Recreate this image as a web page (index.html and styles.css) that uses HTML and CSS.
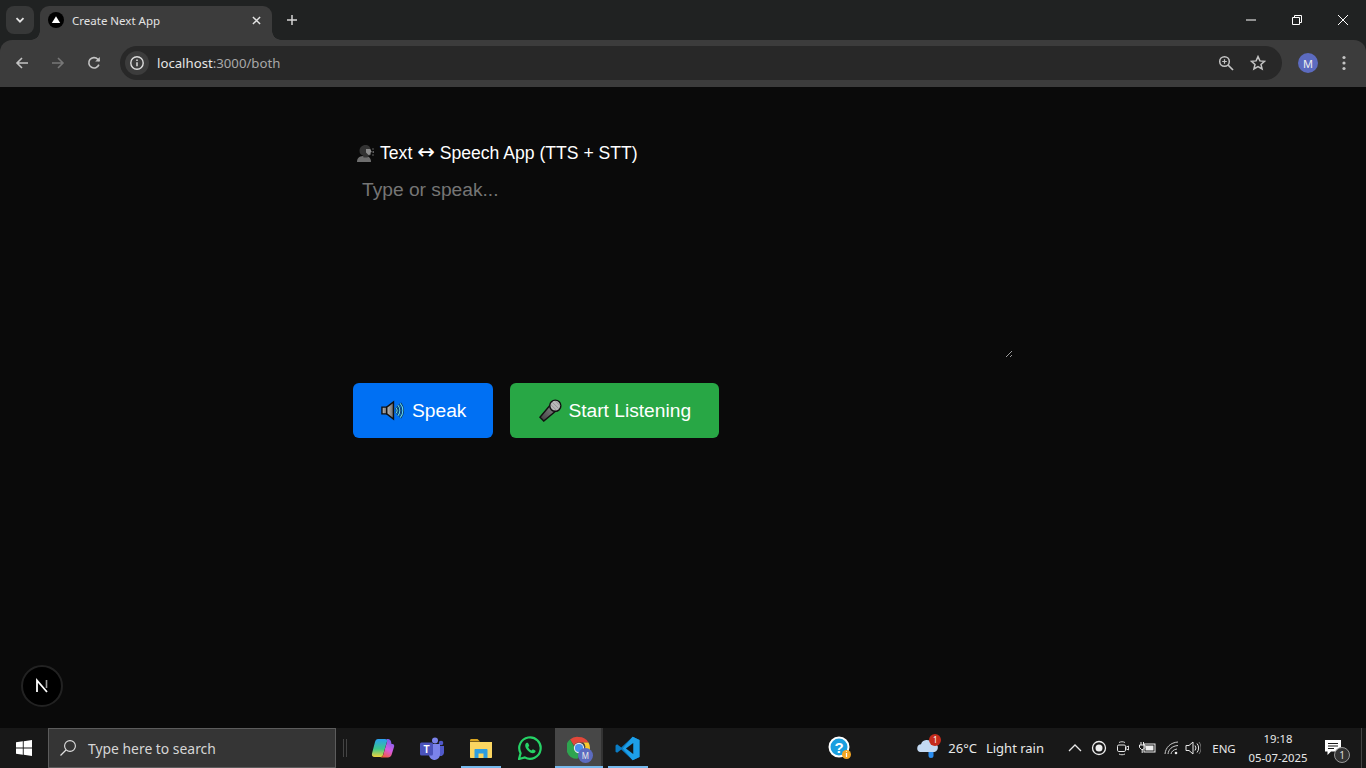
FILE: index.html
```html
<!DOCTYPE html>
<html lang="en">
<head>
<meta charset="utf-8">
<title>Create Next App</title>
<link rel="stylesheet" href="styles.css">
</head>
<body>
<header class="browser">
  <div class="tabstrip">
    <button class="tab-search" aria-label="Search tabs"><svg class="ic12" viewBox="0 0 12 12"><path d="M2.5 4.2 6 7.7l3.5-3.5" fill="none" stroke="#e3e3e3" stroke-width="1.8"/></svg></button>
    <div class="tab">
      <svg class="favicon" viewBox="0 0 16 16"><circle cx="8" cy="8" r="8" fill="#000"/><path d="M8 4.2 12.2 11H3.8z" fill="#fff"/></svg>
      <span class="tab-title">Create Next App</span>
      <svg class="tab-close" viewBox="0 0 10 10"><path d="M1 1l8 8M9 1l-8 8" stroke="#e3e3e3" stroke-width="1.6"/></svg>
    </div>
    <svg class="new-tab" viewBox="0 0 10 10"><path d="M5 0v10M0 5h10" stroke="#d5d5d5" stroke-width="1.5"/></svg>
    <div class="win-controls">
      <span class="win-btn"><svg viewBox="0 0 12 12" class="ic12"><path d="M1 6h10" stroke="#fff" stroke-width="1"/></svg></span>
      <span class="win-btn"><svg viewBox="0 0 12 12" class="ic12"><path d="M1.5 3.5h7v7h-7zM3.5 3.5v-2h7v7h-2" fill="none" stroke="#fff" stroke-width="1"/></svg></span>
      <span class="win-btn"><svg viewBox="0 0 12 12" class="ic12"><path d="M1 1l10 10M11 1 1 11" stroke="#fff" stroke-width="1"/></svg></span>
    </div>
  </div>
  <div class="toolbar">
    <svg class="nav" viewBox="0 0 14 14"><path d="M13 7H2M7 2 2 7l5 5" fill="none" stroke="#c4c4c4" stroke-width="1.6"/></svg>
    <svg class="nav" viewBox="0 0 14 14"><path d="M1 7h11M7 2l5 5-5 5" fill="none" stroke="#777" stroke-width="1.6"/></svg>
    <svg class="nav" viewBox="0 0 14 14"><path d="M11.9 8.6A5.2 5.2 0 1 1 10.8 3.2L12.4 5" fill="none" stroke="#c4c4c4" stroke-width="1.6"/><path d="M12.8 1v4.6H8.2z" fill="#c4c4c4"/></svg>
    <div class="omnibox">
      <span class="site-chip"><svg class="ic16" viewBox="0 0 16 16"><circle cx="8" cy="8" r="6.2" fill="none" stroke="#dcdcdc" stroke-width="1.4"/><path d="M8 7.2v4M8 4.6v1.4" stroke="#dcdcdc" stroke-width="1.5"/></svg></span>
      <span class="url">localhost<span class="url-rest">:3000/both</span></span>
      <svg class="omni-zoom" viewBox="0 0 16 16"><circle cx="6.5" cy="6.5" r="4.8" fill="none" stroke="#c4c4c4" stroke-width="1.5"/><path d="M10 10l5 5" stroke="#c4c4c4" stroke-width="1.7"/><path d="M4.2 6.5h4.6M6.5 4.2v4.6" stroke="#c4c4c4" stroke-width="1.2"/></svg>
      <svg class="omni-star" viewBox="0 0 16 16"><path d="M8 1.6l1.9 4.3 4.6.4-3.5 3.1 1.1 4.6L8 11.6 3.9 14l1.1-4.6-3.5-3.1 4.6-.4z" fill="none" stroke="#c4c4c4" stroke-width="1.5"/></svg>
    </div>
    <span class="avatar">M</span>
    <svg class="kebab" viewBox="0 0 4 16"><circle cx="2" cy="2.5" r="1.6" fill="#c4c4c4"/><circle cx="2" cy="8" r="1.6" fill="#c4c4c4"/><circle cx="2" cy="13.5" r="1.6" fill="#c4c4c4"/></svg>
  </div>
</header>

<main class="page">
  <div class="app">
    <h2 class="title">
      <svg class="title-emoji" viewBox="0 0 18 18"><path d="M1 18c0-4 2-5.500 6-6h3c3 .5 5 2 5 6z" fill="#6e6e6e"/><path d="M3.500 7c0-3.500 2.500-6 6-6 3 0 5 2 5 4.500l1.200 2.500-1.200.5v2c0 1-1 1.500-2 1.300l-1 1.700h-4l-.5-2C5 11 3.500 9.500 3.500 7z" fill="#333"/><path d="M10 5h4.300l1.400 3-1.200.5v2l-2 .5-2.500-2.500z" fill="#8c8c8c"/><path d="M16.500 5h1M16.500 8h1.500M16.500 11h1" stroke="#b0b0b0" stroke-width="1"/></svg>
      <span>Text <span class="title-arrow">↔</span> Speech App (TTS + STT)</span>
    </h2>
    <textarea class="input" placeholder="Type or speak..."></textarea>
    <div class="actions">
      <button class="btn btn-blue">
        <svg class="btn-emoji" viewBox="0 0 24 24"><defs><linearGradient id="spk" x1="0" y1="0" x2="1" y2="0"><stop offset="0" stop-color="#bdbdbd"/><stop offset="1" stop-color="#6a6a6a"/></linearGradient></defs><path d="M1 8.500h5v7H1z" fill="url(#spk)" stroke="#111" stroke-width="1.500"/><path d="M6 8.500 13 3v18l-7-5.500z" fill="url(#spk)" stroke="#111" stroke-width="1.500"/><path d="M15.500 9a4.500 4.500 0 0 1 0 6M17.500 6.500a8 8 0 0 1 0 11M20 4.500a11.500 11.500 0 0 1 0 15" fill="none" stroke="#0b2233" stroke-width="2.400"/><path d="M15.500 9a4.500 4.500 0 0 1 0 6M17.500 6.500a8 8 0 0 1 0 11M20 4.500a11.500 11.500 0 0 1 0 15" fill="none" stroke="#5fd4f0" stroke-width="1.200"/></svg>
        <span>Speak</span>
      </button>
      <button class="btn btn-green">
        <svg class="btn-emoji" viewBox="0 0 24 24"><defs><linearGradient id="mic" x1="0" y1="1" x2="1" y2="0"><stop offset="0" stop-color="#3a3a3a"/><stop offset="1" stop-color="#8a8a8a"/></linearGradient></defs><path d="M11.500 6.500 17.500 12.500 5 23 1 19z" fill="url(#mic)" stroke="#111" stroke-width="1.500"/><circle cx="17" cy="7" r="5.800" fill="#b8b8b8" stroke="#111" stroke-width="1.500"/><path d="M14 3.500l6.500 6.500M17 2l5 5M12.500 6l5.500 5.500" stroke="#8a8a8a" stroke-width=".8"/></svg>
        <span>Start Listening</span>
      </button>
    </div>
  </div>
  <button class="next-badge" aria-label="Next.js dev tools"><svg class="next-n" viewBox="0 0 16 16"><path d="M3 14V2.500L13 14" fill="none" stroke="#fff" stroke-width="1.800"/><path d="M12.500 2v8" stroke="#9a9a9a" stroke-width="1.600"/></svg></button>
</main>

<footer class="taskbar">
  <span class="start"><svg class="ic16b" viewBox="0 0 16 16"><path d="M0 2.300 6.800 1.300v6.300H0zM7.700 1.200 16 0v7.600H7.700zM0 8.400h6.800v6.300L0 13.700zM7.700 8.400H16V16l-8.300-1.200z" fill="#fff"/></svg></span>
  <div class="search">
    <svg class="search-ic" viewBox="0 0 18 18"><circle cx="11" cy="7" r="5.400" fill="none" stroke="#e0e0e0" stroke-width="1.100"/><path d="M7 11l-5.500 5.500" stroke="#e0e0e0" stroke-width="1.200"/></svg>
    <span class="search-text">Type here to search</span>
  </div>
  <span class="grip"></span>
  <div class="apps">
    <span class="app-ic"><svg class="ic24" viewBox="0 0 24 24"><defs><linearGradient id="cpa" x1="0.300" y1="0" x2="0.300" y2="1"><stop offset="0" stop-color="#2a9ff0"/><stop offset=".55" stop-color="#3cc88a"/><stop offset="1" stop-color="#f2d23c"/></linearGradient><linearGradient id="cpb" x1="0.700" y1="0" x2="0.300" y2="1"><stop offset="0" stop-color="#6f63f0"/><stop offset=".55" stop-color="#d65ce0"/><stop offset="1" stop-color="#f5583c"/></linearGradient></defs><path d="M7 3h7c1.500 0 2.500 1 2 2.500L12 19c-.5 1.500-1.500 2-2.500 2H3.500C1.500 21 .5 19.500 1 17.500L4 6c.5-1.800 1.500-3 3-3z" fill="url(#cpa)"/><path d="M15 3h2c1.500 0 2.500 1 3 2.500l.5 2.500h1c1.500 0 2 1.500 1.500 3l-2.500 8c-.5 1.500-2 2.500-3.500 2.500H9c1.500 0 2.700-1 3.200-2.500L16 6c.4-1.300 0-2.300-1-3z" fill="url(#cpb)"/></svg></span>
    <span class="app-ic"><svg class="ic24" viewBox="0 0 24 24"><circle cx="15" cy="4.500" r="3" fill="#7b83eb"/><circle cx="21" cy="7" r="2.300" fill="#5059c9"/><path d="M18 10h6v7a3.500 3.500 0 0 1-6 2z" fill="#5059c9"/><path d="M8 8h12v10a5.500 5.500 0 0 1-11 1z" fill="#7b83eb"/><rect x="0" y="6.500" width="13" height="13" rx="1.500" fill="#4b53bc"/><text class="teams-t" x="6.500" y="16.500">T</text></svg></span>
    <span class="app-ic app-open"><svg class="ic24" viewBox="0 0 24 24"><path d="M1 4.500C1 3.500 1.500 3 2.500 3h6L11 5.500h-10z" fill="#d9a520"/><path d="M1 6h22v15c0 .6-.4 1-1 1H2c-.6 0-1-.4-1-1z" fill="#fbd661"/><path d="M5.500 22v-8c0-.6.400-1 1-1h11c.6 0 1 .4 1 1v8h-4v-4.500h-5V22z" fill="#2f9ee0"/></svg></span>
    <span class="app-ic app-whatsapp"><svg class="ic24" viewBox="0 0 24 24"><path d="M1 23l1.600-5.800A10.700 10.700 0 1 1 6.800 21.400z" fill="none" stroke="#25d366" stroke-width="2.200"/><path d="M8.800 6.800c-.5 0-1.600.9-1.600 2.800 0 3.300 4.200 7.600 7.600 7.600 1.900 0 2.800-1.200 2.800-2.200 0-.4-2.400-1.700-2.800-1.700l-1.200 1.300c-1.500-.5-3-2-3.500-3.500l1.200-1.200c0-.5-1.200-3.100-1.600-3.100z" fill="#25d366"/></svg></span>
    <span class="app-ic app-active"><svg class="ic24" viewBox="0 0 24 24"><path d="M12 1a11 11 0 0 1 9.500 5.500H12a5.500 5.500 0 0 0-5 3L3 3.500A11 11 0 0 1 12 1z" fill="#e2483a"/><path d="M21.500 6.500A11 11 0 0 1 12 23l4.800-8.300a5.500 5.500 0 0 0-.5-8.200z" fill="#f8c92e"/><path d="M3 3.500l4.800 8.300a5.500 5.500 0 0 0 5.800 5.500L10.500 22.800A11 11 0 0 1 3 3.500z" fill="#2ea44f"/><circle cx="12" cy="12" r="4.600" fill="#4a90f0" stroke="#e8e8e8" stroke-width="1.100"/></svg><span class="profile-badge">M</span></span>
    <span class="app-ic app-open"><svg class="ic24b" viewBox="0 0 24 24"><path d="M17 .8 23.500 3.800v16.400L17 23.200 6 13 2 16 .5 15V9l1.500-1 4 3z" fill="#0a7cc4"/><path d="M17 .8 23.500 3.800v16.400L17 23.200 7.500 12z" fill="#1d9fe8"/><path d="M17.500 6.700v10.600L10.500 12z" fill="#161616"/></svg></span>
  </div>
  <div class="tray">
    <span class="help"><svg class="ic24" viewBox="0 0 24 24"><circle cx="11" cy="11" r="9.500" fill="#1a9fe0" stroke="#fff" stroke-width="2"/><text class="help-q" x="11" y="16.500">?</text><circle cx="18.500" cy="18.500" r="4.500" fill="#f5a623"/><path d="M18.500 17v4M18.500 15.300v.8" stroke="#fff" stroke-width="1.200"/></svg></span>
    <span class="weather">
      <span class="weather-ic"><svg class="ic24" viewBox="0 0 24 24"><path d="M4 16a4 4 0 0 1 1-7.800A6 6 0 0 1 16 7a4.500 4.500 0 0 1 2.500 9z" fill="#c3d9f2"/><path d="M12.500 16h5v3.500a2.500 2.500 0 0 1-5 0z" fill="#2a8df0"/></svg><span class="weather-badge">1</span></span>
      <span class="weather-text">26°C</span>
      <span class="weather-text weather-desc">Light rain</span>
    </span>
    <span class="tray-ic"><svg class="ic12b" viewBox="0 0 14 8"><path d="M1 7l6-6 6 6" fill="none" stroke="#e8e8e8" stroke-width="1.300"/></svg></span>
    <span class="tray-ic"><svg class="ic16" viewBox="0 0 16 16"><circle cx="8" cy="8" r="6.500" fill="none" stroke="#eee" stroke-width="1.300"/><circle cx="8" cy="8" r="3.500" fill="#eee"/></svg></span>
    <span class="tray-ic"><svg class="ic16" viewBox="0 0 16 16"><rect x="2.500" y="5" width="8" height="6.500" rx="1.300" fill="none" stroke="#e8e8e8"/><path d="M10.500 7.500l3-1.500v4l-3-1.500zM4 2.500c2-1 4-1 6 0M4 14c2 1 4 1 6 0" fill="none" stroke="#e8e8e8" stroke-width=".9"/></svg></span>
    <span class="tray-ic tray-battery"><svg class="ic16w" viewBox="0 0 18 14"><rect x="6" y="3" width="11" height="8" fill="none" stroke="#eee"/><rect x="7.500" y="4.500" width="8" height="5" fill="#eee"/><path d="M3 1v3M5.500 1v3M1.500 4h5.500v2.500L5 8.500H3.500L1.500 6.500zM4.200 8.500V12" fill="none" stroke="#eee"/></svg></span>
    <span class="tray-ic tray-wifi"><svg class="ic16" viewBox="0 0 16 16"><path d="M1 14C1.500 7.500 6.500 2.500 14 2M4 14c.4-4.500 4-8 10-8.500M7 14c.3-2.300 2.500-4.500 6-5" fill="none" stroke="#ccc"/><circle cx="12" cy="13" r="1.300" fill="#eee"/></svg></span>
    <span class="tray-ic tray-vol"><svg class="ic16" viewBox="0 0 16 16"><path d="M1 5.500h3L8 2v12l-4-3.500H1z" fill="none" stroke="#e8e8e8"/><path d="M10 5.500a4 4 0 0 1 0 5M12 3.500a7 7 0 0 1 0 9" fill="none" stroke="#e8e8e8"/><path d="M14 2a9.500 9.500 0 0 1 0 12" fill="none" stroke="#777"/></svg></span>
    <span class="lang">ENG</span>
    <span class="clock"><span>19:18</span><span>05-07-2025</span></span>
    <span class="notify"><svg class="ic18" viewBox="0 0 18 18"><path d="M1 1h16v11.500H7L3.500 16v-3.500H1z" fill="#fff"/><path d="M4 4.500h10M4 7h10M4 9.500h6" stroke="#1a1a1a"/></svg><span class="notify-count">1</span></span>
    <span class="show-desktop"></span>
  </div>
</footer>
</body>
</html>
```

FILE: styles.css
```css
* { box-sizing: border-box; }
html, body { margin: 0; height: 100%; }
body {
  width: 1366px;
  height: 768px;
  overflow: hidden;
  display: flex;
  flex-direction: column;
  background: #0a0a0a;
  font-family: "Liberation Sans", Arial, sans-serif;
}
svg { display: block; flex: none; }
button { font-family: inherit; }

.ic12 { width: 12px; height: 12px; }
.ic12b { width: 14px; height: 8px; }
.ic16 { width: 16px; height: 16px; }
.ic16b { width: 16px; height: 16px; }
.ic16w { width: 18px; height: 14px; }
.ic18 { width: 18px; height: 18px; }
.ic24 { width: 24px; height: 24px; }
.ic24b { width: 25px; height: 25px; }

/* browser chrome */
.browser { flex: none; height: 87px; background: #202222; }
.tabstrip {
  height: 40px;
  display: flex;
  align-items: flex-end;
  padding-left: 6px;
  font-family: "Noto Sans", "Open Sans", sans-serif;
}
.tab-search {
  width: 28px;
  height: 28px;
  margin-bottom: 6px;
  padding: 0;
  border: 0;
  border-radius: 8px;
  background: #373838;
  display: flex;
  align-items: center;
  justify-content: center;
}
.tab {
  position: relative;
  width: 232px;
  height: 34px;
  margin-left: 6px;
  padding: 0 10px 6px 8px;
  display: flex;
  align-items: center;
  background: #3c3c3c;
  border-radius: 9px 9px 0 0;
}
.tab::before, .tab::after {
  content: "";
  position: absolute;
  bottom: 0;
  width: 9px;
  height: 9px;
}
.tab::before { left: -9px; background: radial-gradient(circle at 0 0, transparent 8.5px, #3c3c3c 9px); }
.tab::after { right: -9px; background: radial-gradient(circle at 100% 0, transparent 8.5px, #3c3c3c 9px); }
.favicon { width: 16px; height: 16px; }
.tab-title {
  flex: 1;
  margin-left: 8px;
  color: #e3e3e3;
  font-size: 11.5px;
  white-space: nowrap;
}
.tab-close { width: 9px; height: 9px; margin-right: 1px; }
.new-tab { width: 10px; height: 10px; margin: 0 0 15px 15px; }
.win-controls { margin-left: auto; display: flex; align-self: flex-start; }
.win-btn {
  width: 46px;
  height: 40px;
  display: flex;
  align-items: center;
  justify-content: center;
}
.toolbar {
  position: relative;
  height: 47px;
  display: flex;
  align-items: center;
  padding: 0 20px 1px 15px;
  background: #3c3c3c;
  border-radius: 12px 12px 0 0;
}
.nav { width: 14px; height: 14px; margin-right: 22px; }
.nav:nth-child(3) { margin-right: 19px; }
.omnibox {
  flex: 1;
  height: 34px;
  margin-right: 16px;
  padding: 0 16px 0 5px;
  display: flex;
  align-items: center;
  background: #282828;
  border-radius: 17px;
  font-family: "Noto Sans", "Open Sans", sans-serif;
}
.site-chip {
  width: 24px;
  height: 24px;
  border-radius: 50%;
  background: #3c3c3c;
  display: flex;
  align-items: center;
  justify-content: center;
}
.url { margin-left: 8px; flex: 1; color: #e6e6e6; font-size: 13.2px; }
.url-rest { color: #a8a8a8; }
.omni-zoom { width: 16px; height: 16px; margin-right: 16px; }
.omni-star { width: 16px; height: 16px; }
.avatar {
  width: 20px;
  height: 20px;
  border-radius: 50%;
  background: #5c6bc0;
  color: #f0f0f0;
  font-family: "Noto Sans", sans-serif;
  font-size: 11px;
  display: flex;
  align-items: center;
  justify-content: center;
}
.kebab { width: 4px; height: 16px; margin-left: 24px; }

/* page */
.page {
  position: relative;
  flex: 1;
  min-height: 0;
  display: flex;
  justify-content: center;
  background: #0a0a0a;
}
.app { width: 660px; padding-top: 56px; }
.title {
  margin: 0;
  height: 20px;
  display: flex;
  align-items: center;
  gap: 6px;
  padding-left: 3px;
  color: #fff;
  font-size: 17.6px;
  font-weight: 400;
  white-space: nowrap;
}
.title-arrow {
  font-family: "DejaVu Sans", sans-serif;
  font-size: 21px;
  line-height: 0;
}
.title-emoji { width: 18px; height: 18px; }
.input {
  display: block;
  width: 660px;
  height: 185px;
  margin-top: 10px;
  padding: 6px 9px;
  border: 0;
  outline: 0;
  background: transparent;
  color: #ededed;
  color-scheme: dark;
  font-family: inherit;
  font-size: 19.2px;
}
.input::placeholder { color: #757575; }
.actions { display: flex; gap: 17px; margin-top: 25px; }
.btn {
  height: 55px;
  padding: 0 27px 0 28px;
  display: flex;
  align-items: center;
  gap: 8px;
  border: 0;
  border-radius: 6px;
  color: #fff;
  font-size: 19.2px;
}
.btn-blue { background: #0070f3; }
.btn-green { background: #28a745; padding: 0 28px 0 29px; gap: 6px; }
.btn-emoji { width: 23px; height: 23px; }
.next-badge {
  position: absolute;
  left: 21px;
  bottom: 21px;
  width: 42px;
  height: 42px;
  padding: 0;
  border: 2px solid #222;
  border-radius: 50%;
  background: #000;
  display: flex;
  align-items: center;
  justify-content: center;
}
.next-n { width: 16px; height: 16px; }

/* taskbar */
.taskbar {
  flex: none;
  height: 40px;
  display: flex;
  align-items: center;
  background: #181818;
  font-family: "Noto Sans", "Open Sans", sans-serif;
  color: #e8e8e8;
}
.start {
  width: 48px;
  height: 40px;
  display: flex;
  align-items: center;
  justify-content: center;
}
.search {
  width: 288px;
  height: 40px;
  padding-left: 10px;
  display: flex;
  align-items: center;
  background: #353535;
  border: 1px solid #5c5c5c;
}
.search-ic { width: 18px; height: 18px; }
.search-text { margin-left: 11px; font-size: 13.9px; color: #d6d6d6; white-space: nowrap; }
.grip {
  width: 4px;
  height: 18px;
  margin-left: 7px;
  border-left: 1px solid #444;
  border-right: 1px solid #444;
}
.apps { display: flex; margin-left: 11px; height: 40px; }
.app-ic {
  position: relative;
  width: 49px;
  height: 40px;
  display: flex;
  align-items: center;
  justify-content: center;
}
.app-whatsapp { width: 50px; }
.app-open::after, .app-active::after {
  content: "";
  position: absolute;
  bottom: 0;
  left: 5px;
  right: 4px;
  height: 2px;
  background: #76b9ed;
}
.app-active { width: 48px; background: #474747; box-shadow: inset -2px 0 0 #333; }
.app-active::after { left: 0; right: 0; }
.profile-badge {
  position: absolute;
  left: 23px;
  top: 20px;
  width: 15px;
  height: 15px;
  border-radius: 50%;
  background: #5c6bc0;
  color: #e8e8e8;
  font-size: 8px;
  line-height: 15px;
  text-align: center;
}
.teams-t { fill: #fff; font: 700 10px "Liberation Sans", sans-serif; text-anchor: middle; }
.help-q { fill: #fff; font: 700 15px "Liberation Sans", sans-serif; text-anchor: middle; }
.tray { margin-left: auto; display: flex; align-items: center; height: 40px; }
.help { margin-right: 64px; }
.weather { display: flex; align-items: center; font-size: 13px; white-space: nowrap; }
.weather-ic { position: relative; margin-right: 8px; }
.weather-badge {
  position: absolute;
  right: -1px;
  top: -2px;
  width: 12px;
  height: 12px;
  border-radius: 50%;
  background: #c42b1c;
  color: #fff;
  font-size: 8px;
  line-height: 12px;
  text-align: center;
}
.weather-desc { margin-left: 9px; margin-right: 19px; }
.tray-ic {
  width: 24px;
  height: 40px;
  display: flex;
  align-items: center;
  justify-content: center;
}
.tray-battery { margin-right: 2px; }
.tray-wifi { width: 22px; }
.tray-vol { width: 20px; }
.lang { width: 36px; margin-left: 3px; text-align: center; font-size: 11.5px; }
.clock {
  width: 72px;
  display: flex;
  flex-direction: column;
  align-items: center;
  font-size: 11.3px;
  line-height: 19px;
}
.notify {
  position: relative;
  width: 38px;
  margin-right: 9px;
  display: flex;
  justify-content: center;
}
.notify-count {
  position: absolute;
  right: 2px;
  bottom: -6px;
  width: 16px;
  height: 16px;
  border: 1px solid #999;
  border-radius: 50%;
  background: #333;
  color: #ddd;
  font-size: 10px;
  line-height: 14px;
  text-align: center;
}
.show-desktop { width: 5px; height: 40px; border-left: 1px solid #444; }
```
